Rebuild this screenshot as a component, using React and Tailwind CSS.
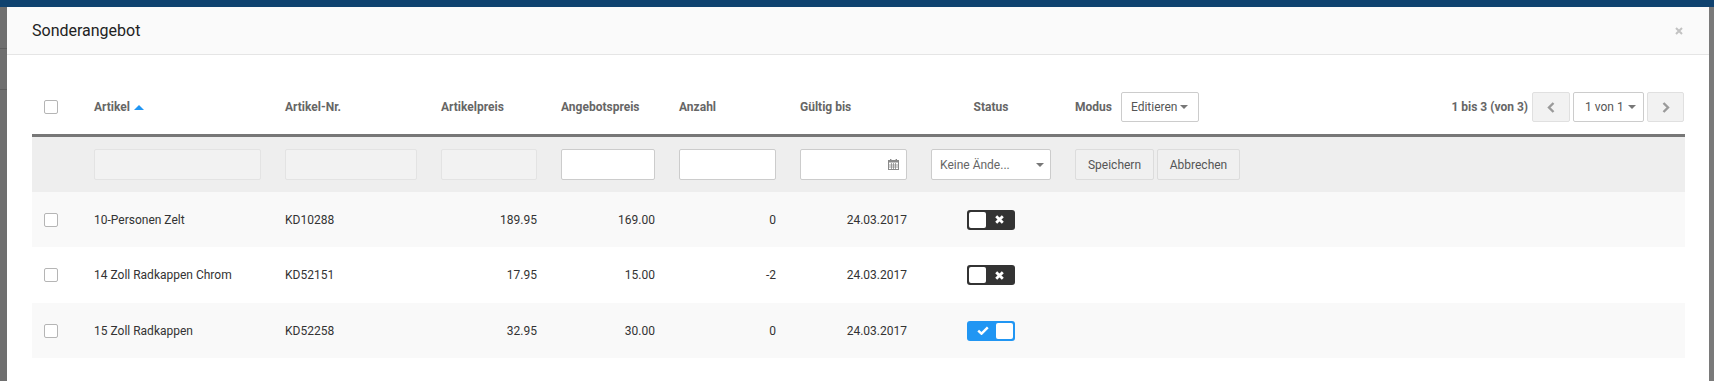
import React from "react";

const COLS = "grid grid-cols-[50px_191px_156px_120px_118px_121px_131px_144px_1fr]";

const rows = [
  { name: "10-Personen Zelt", nr: "KD10288", price: "189.95", offer: "169.00", qty: "0", until: "24.03.2017", active: false },
  { name: "14 Zoll Radkappen Chrom", nr: "KD52151", price: "17.95", offer: "15.00", qty: "-2", until: "24.03.2017", active: false },
  { name: "15 Zoll Radkappen", nr: "KD52258", price: "32.95", offer: "30.00", qty: "0", until: "24.03.2017", active: true },
];

function Caret() {
  return (
    <svg width="8" height="4" viewBox="0 0 8 4" className="shrink-0">
      <path d="M0 0h8L4 4z" fill="#777" />
    </svg>
  );
}

function Checkbox() {
  return <span className="block w-[14px] h-[14px] rounded-[2px] border border-[#b5b5b5] bg-white" />;
}

function CalendarIcon() {
  return (
    <svg width="11" height="11" viewBox="0 0 11 11" className="shrink-0">
      <rect x="0.5" y="1.5" width="10" height="9" fill="none" stroke="#8a8a8a" />
      <rect x="0.5" y="1.5" width="10" height="2" fill="#8a8a8a" />
      <rect x="2" y="0" width="1.4" height="2.5" fill="#8a8a8a" />
      <rect x="7.6" y="0" width="1.4" height="2.5" fill="#8a8a8a" />
      <path d="M3.5 4v6M5.5 4v6M7.5 4v6M1 6h9M1 8h9" stroke="#8a8a8a" strokeWidth="0.8" />
    </svg>
  );
}

function Toggle({ on }) {
  if (on) {
    return (
      <span className="flex items-center w-[48px] h-[20px] rounded-[3px] bg-[#2196f3] p-[2px]">
        <span className="flex-1 flex items-center justify-center">
          <svg width="12" height="9" viewBox="0 0 12 9">
            <path d="M1.2 4.6l3.3 3.1L10.8 1.3" fill="none" stroke="#fff" strokeWidth="2.4" />
          </svg>
        </span>
        <span className="w-[17px] h-[16px] rounded-[2px] bg-white" />
      </span>
    );
  }
  return (
    <span className="flex items-center w-[48px] h-[20px] rounded-[3px] bg-[#333] p-[2px]">
      <span className="w-[17px] h-[16px] rounded-[2px] bg-white" />
      <span className="flex-1 flex items-center justify-center">
        <svg width="9" height="9" viewBox="0 0 9 9">
          <path d="M1.2 1.2l6.6 6.6M7.8 1.2L1.2 7.8" stroke="#fff" strokeWidth="2.8" />
        </svg>
      </span>
    </span>
  );
}

function Chevron({ dir }) {
  return (
    <svg width="8" height="11" viewBox="0 0 8 11">
      <path d={dir === "left" ? "M6.5 1L2 5.5 6.5 10" : "M1.5 1L6 5.5 1.5 10"} fill="none" stroke="#9a9a9a" strokeWidth="2.4" />
    </svg>
  );
}

export default function App() {
  return (
    <div className="w-[1714px] h-[381px] overflow-hidden bg-[#747474] font-['Roboto',sans-serif] text-[12px] text-[#333]">
      <div className="h-[7px] bg-[#0f426f]" />
      <div className="flex h-[374px]">
        <div className="w-[7px] bg-[#6f6f6f] flex flex-col">
          <div className="h-[41px]" />
          <div className="h-px bg-[#5e5e5e]" />
          <div className="h-[40px]" />
          <div className="h-px bg-[#5e5e5e]" />
        </div>

        <div className="w-[1702px] bg-white flex flex-col">
          <div className="h-[48px] shrink-0 bg-[#fafafa] border-b border-[#e5e5e5] flex items-center pl-[25px] pr-[26px]">
            <h1 className="text-[16px] text-[#222] leading-none">Sonderangebot</h1>
            <svg width="8" height="8" viewBox="0 0 8 8" className="ml-auto">
              <path d="M1 1l6 6M7 1L1 7" stroke="#c2c2c2" strokeWidth="2" />
            </svg>
          </div>

          <div className="pt-[25px] pl-[25px] pr-[24px]">
            <div className={`${COLS} h-[57px] font-bold text-[#666] border-b-[3px] border-[#777]`}>
              <div className="px-3 flex items-center"><Checkbox /></div>
              <div className="px-3 flex items-center gap-[4px]">
                Artikel
                <svg width="10" height="5" viewBox="0 0 10 5"><path d="M0 5L5 0l5 5z" fill="#2196f3" /></svg>
              </div>
              <div className="px-3 flex items-center">Artikel-Nr.</div>
              <div className="px-3 flex items-center">Artikelpreis</div>
              <div className="px-3 flex items-center">Angebotspreis</div>
              <div className="px-3 flex items-center">Anzahl</div>
              <div className="px-3 flex items-center">Gültig bis</div>
              <div className="px-3 flex items-center justify-center">Status</div>
              <div className="pl-3 pr-px flex items-center">
                <span>Modus</span>
                <div className="ml-[9px] w-[78px] h-[30px] border border-[#ccc] rounded-[2px] bg-white flex items-center pl-[9px] pr-[10px] font-normal text-[#555]">
                  <span>Editieren</span>
                  <span className="ml-auto"><Caret /></span>
                </div>
                <div className="ml-auto flex items-center">
                  <span className="mr-[4px]">1 bis 3 (von 3)</span>
                  <button className="w-[38px] h-[30px] bg-[#f2f2f2] border border-[#e0e0e0] rounded-[2px] flex items-center justify-center">
                    <Chevron dir="left" />
                  </button>
                  <div className="ml-[3px] w-[71px] h-[30px] border border-[#ccc] rounded-[2px] bg-white flex items-center pl-[11px] pr-[7px] font-normal text-[#555]">
                    <span>1 von 1</span>
                    <span className="ml-auto"><Caret /></span>
                  </div>
                  <button className="ml-[3px] w-[37px] h-[30px] bg-[#f2f2f2] border border-[#e0e0e0] rounded-[2px] flex items-center justify-center">
                    <Chevron dir="right" />
                  </button>
                </div>
              </div>
            </div>

            <div className={`${COLS} h-[55px] bg-[#eeeeee] items-center`}>
              <div />
              <div className="px-3"><div className="h-[31px] bg-[#f2f2f2] border border-[#e3e3e3] rounded-[2px]" /></div>
              <div className="px-3"><div className="h-[31px] bg-[#f2f2f2] border border-[#e3e3e3] rounded-[2px]" /></div>
              <div className="px-3"><div className="h-[31px] bg-[#f2f2f2] border border-[#e3e3e3] rounded-[2px]" /></div>
              <div className="px-3"><div className="h-[31px] bg-white border border-[#ccc] rounded-[2px]" /></div>
              <div className="px-3"><div className="h-[31px] bg-white border border-[#ccc] rounded-[2px]" /></div>
              <div className="px-3">
                <div className="h-[31px] bg-white border border-[#ccc] rounded-[2px] flex items-center justify-end pr-[7px]">
                  <CalendarIcon />
                </div>
              </div>
              <div className="px-3">
                <div className="h-[31px] bg-white border border-[#ccc] rounded-[2px] flex items-center pl-[8px] pr-[6px] text-[#666]">
                  <span>Keine Ände...</span>
                  <span className="ml-auto"><Caret /></span>
                </div>
              </div>
              <div className="px-3 flex items-center gap-[3px] text-[#555]">
                <button className="w-[79px] h-[31px] bg-[#f0f0f0] border border-[#dcdcdc] rounded-[2px]">Speichern</button>
                <button className="w-[83px] h-[31px] bg-[#f0f0f0] border border-[#dcdcdc] rounded-[2px]">Abbrechen</button>
              </div>
            </div>

            {rows.map((r, i) => (
              <div key={r.nr} className={`${COLS} ${i === 1 ? "h-[56px]" : "h-[55px]"} items-center ${i % 2 === 0 ? "bg-[#f9f9f9]" : "bg-white"}`}>
                <div className="px-3 flex items-center"><Checkbox /></div>
                <div className="px-3">{r.name}</div>
                <div className="px-3">{r.nr}</div>
                <div className="px-3 text-right">{r.price}</div>
                <div className="px-3 text-right">{r.offer}</div>
                <div className="px-3 text-right">{r.qty}</div>
                <div className="px-3 text-right">{r.until}</div>
                <div className="px-3 flex justify-center"><Toggle on={r.active} /></div>
                <div />
              </div>
            ))}
          </div>
        </div>

        <div className="flex-1 bg-[#7a7a7a]" />
      </div>
    </div>
  );
}
